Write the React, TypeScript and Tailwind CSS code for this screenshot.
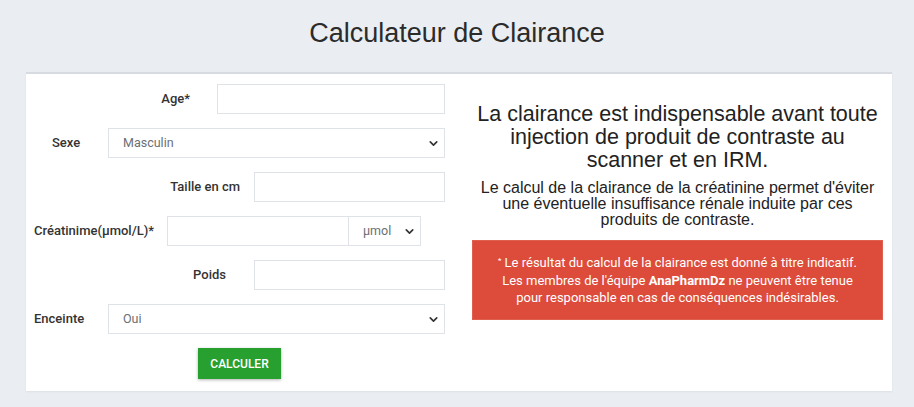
import { ChevronDown } from "lucide-react";

const labelCls = "text-[13px] font-medium text-[#333] whitespace-nowrap";
const inputCls = "h-[30px] border border-[#dfe3e8] bg-white outline-none px-3 text-[12px]";

function Select({ value, className }: { value: string; className: string }) {
  return (
    <div className={`relative h-[30px] ${className}`}>
      <select
        defaultValue={value}
        className="h-full w-full appearance-none border border-[#dfe3e8] bg-white pl-[14px] pr-5 text-[12.5px] text-[#6b6f75] outline-none"
      >
        <option>{value}</option>
      </select>
      <ChevronDown
        className="pointer-events-none absolute right-[5px] top-[9px] h-[13px] w-[13px] text-[#333]"
        strokeWidth={3}
      />
    </div>
  );
}

export default function App() {
  return (
    <div
      className="min-h-[407px] w-full bg-[#eaedf1] pt-[16px]"
      style={{ fontFamily: "Roboto, 'Liberation Sans', sans-serif" }}
    >
      <h1
        className="text-center text-[27px] leading-[34px] text-[#2b2b2b]"
        style={{ fontFamily: "'Liberation Sans', Arial, sans-serif" }}
      >
        Calculateur de Clairance
      </h1>

      <div className="mx-[26px] mt-[22px] flex border-t-2 border-[#d7dbe1] bg-white shadow-[0_1px_2px_rgba(0,0,0,0.06)] w-[866px]">
        {/* form */}
        <div className="w-[437px] pl-[8px] pr-[18px] pt-[10px] pb-[12px] flex flex-col gap-[14px]">
          <div className="flex items-center h-[30px]">
            <div className={`flex-1 text-right pr-[27px] ${labelCls}`}>Age*</div>
            <input className={`${inputCls} w-[228px]`} />
          </div>

          <div className="flex items-center h-[30px]">
            <div className={`w-[74px] pl-[18px] ${labelCls}`}>Sexe</div>
            <Select value="Masculin" className="flex-1" />
          </div>

          <div className="flex items-center h-[30px]">
            <div className={`flex-1 text-right pr-[14px] ${labelCls}`}>Taille en cm</div>
            <input className={`${inputCls} w-[191px]`} />
          </div>

          <div className="flex items-center h-[30px]">
            <div className={`w-[133px] ${labelCls}`}>Créatinime(µmol/L)*</div>
            <input className={`${inputCls} w-[182px]`} />
            <Select value="µmol" className="w-[73px] -ml-px" />
          </div>

          <div className="flex items-center h-[30px]">
            <div className={`flex-1 text-right pr-[28px] ${labelCls}`}>Poids</div>
            <input className={`${inputCls} w-[191px]`} />
          </div>

          <div className="flex items-center h-[30px]">
            <div className={`w-[74px] ${labelCls}`}>Enceinte</div>
            <Select value="Oui" className="flex-1" />
          </div>

          <div className="flex">
            <button className="ml-[164px] h-[31px] w-[83px] bg-[#28a02f] text-[12px] font-medium text-white shadow-[0_1px_3px_rgba(0,0,0,0.3)]">
              CALCULER
            </button>
          </div>
        </div>

        {/* info */}
        <div
          className="flex-1 px-[9px] pt-[29px] text-center text-[#222]"
          style={{ fontFamily: "'Liberation Sans', Arial, sans-serif" }}
        >
          <h2 className="text-[21.5px] leading-[23px] whitespace-nowrap">
            La clairance est indispensable avant toute
            <br />
            injection de produit de contraste au
            <br />
            scanner et en IRM.
          </h2>
          <p className="mt-[8px] text-[16px] leading-[16px] whitespace-nowrap">
            Le calcul de la clairance de la créatinine permet d'éviter
            <br />
            une éventuelle insuffisance rénale induite par ces
            <br />
            produits de contraste.
          </p>
          <div
            className="mt-[12px] h-[80px] bg-[#dd4b3b] border border-[#e0604f] pt-[13px] text-[13px] leading-[17.5px] text-white whitespace-nowrap"
            style={{ fontFamily: "Roboto, 'Liberation Sans', sans-serif" }}
          >
            <sup className="text-[8px]">*</sup> Le résultat du calcul de la clairance est donné à titre indicatif.
            <br />
            Les membres de l'équipe <b>AnaPharmDz</b> ne peuvent être tenue
            <br />
            pour responsable en cas de conséquences indésirables.
          </div>
        </div>
      </div>
    </div>
  );
}
